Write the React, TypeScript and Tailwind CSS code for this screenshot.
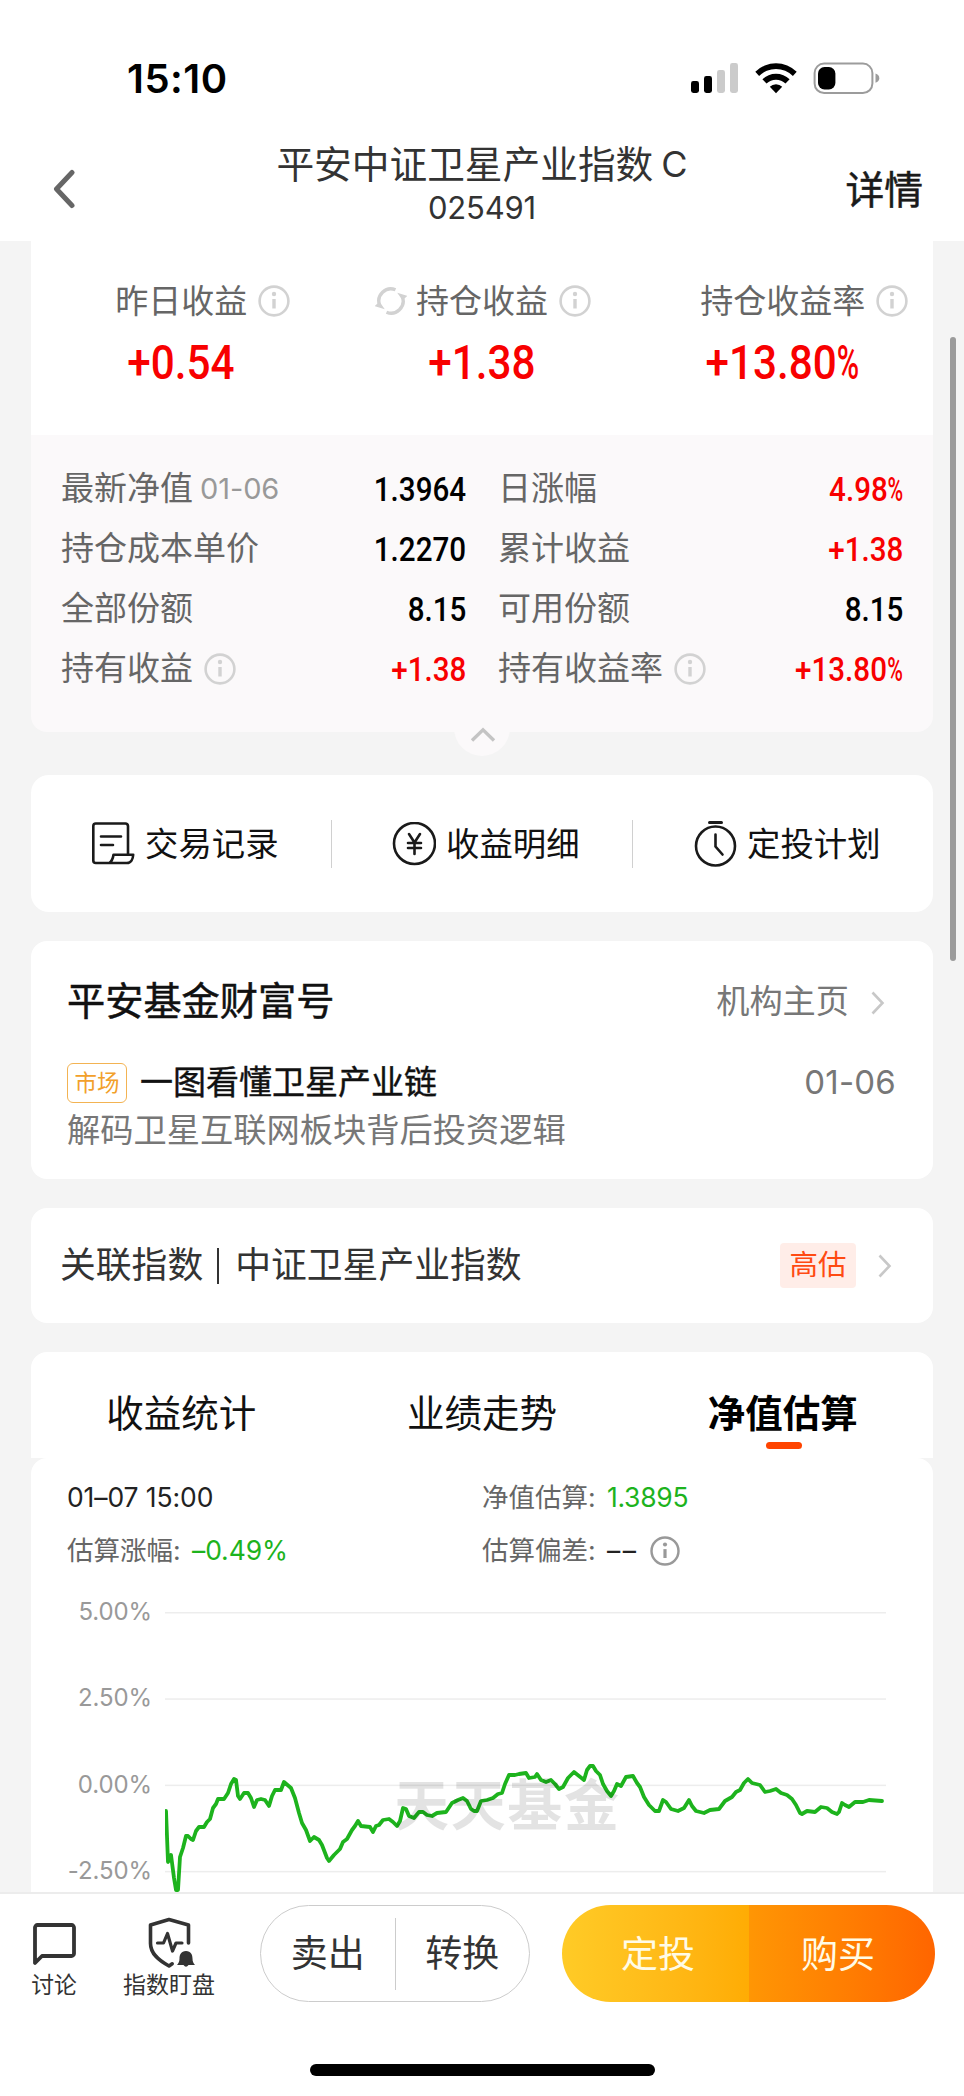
import type { ReactNode } from "react";
import clsx from "clsx";

const GREEN = "#1db31d";

// [x, y] in the chart's own 721 x 279 box
const POINTS: [number, number][] = [
  [1, 119], [3, 170], [6, 163], [9, 186], [11, 198], [13, 198], [15, 165], [18, 156], [21, 144], [23, 144],
  [26, 147], [28, 148], [31, 139], [34, 135], [39, 135], [42, 130], [45, 127], [48, 116], [51, 112], [53, 107],
  [59, 107], [63, 101], [66, 92], [69, 87], [71, 88], [73, 104], [75, 107], [79, 101], [83, 101], [86, 106],
  [89, 115], [92, 108], [96, 107], [100, 108], [104, 114], [107, 104], [110, 98], [116, 98], [119, 90], [126, 96],
  [130, 106], [134, 121], [137, 131], [141, 138], [145, 149], [149, 145], [154, 148], [157, 153], [162, 166], [164, 169],
  [169, 163], [175, 157], [178, 150], [182, 147], [187, 138], [190, 134], [193, 129], [196, 134], [205, 135], [208, 140],
  [211, 134], [214, 133], [218, 128], [224, 127], [228, 130], [232, 134], [235, 129], [238, 116], [241, 117], [244, 124],
  [249, 126], [254, 120], [258, 120], [262, 123], [267, 124], [272, 121], [281, 120], [287, 111], [293, 108], [298, 106],
  [302, 109], [306, 117], [309, 119], [312, 119], [316, 109], [322, 108], [328, 106], [333, 102], [337, 101], [340, 92],
  [344, 83], [350, 83], [354, 82], [361, 81], [364, 86], [370, 85], [372, 82], [376, 88], [381, 90], [386, 88],
  [390, 92], [394, 97], [398, 95], [403, 86], [409, 80], [414, 84], [419, 88], [422, 78], [425, 74], [428, 74],
  [431, 79], [435, 83], [438, 92], [442, 99], [446, 104], [449, 99], [452, 92], [456, 94], [461, 85], [468, 84],
  [472, 91], [475, 95], [479, 105], [484, 113], [490, 119], [494, 119], [498, 108], [501, 110], [506, 117], [513, 119],
  [519, 116], [524, 108], [527, 114], [531, 119], [539, 121], [545, 118], [554, 117], [560, 109], [567, 105], [571, 100],
  [575, 98], [579, 91], [583, 87], [587, 91], [595, 93], [600, 100], [605, 99], [611, 97], [616, 101], [622, 103],
  [627, 107], [631, 113], [635, 121], [637, 122], [642, 119], [650, 120], [656, 115], [662, 116], [667, 120], [672, 122],
  [674, 120], [677, 111], [680, 113], [684, 115], [690, 110], [698, 110], [704, 108], [717, 109],
];

const TICKS = ["5.00%", "2.50%", "0.00%", "-2.50%"];

function Info({ className }: { className?: string }) {
  return (
    <svg viewBox="0 0 32 32" className={clsx("shrink-0", className)} fill="none" stroke="currentColor">
      <circle cx="16" cy="16" r="14.4" strokeWidth="2.6" />
      <path d="M16 14v9.5" strokeWidth="3.4" />
      <circle cx="16" cy="9" r="2.2" fill="currentColor" stroke="none" />
    </svg>
  );
}

function Chevron({ className }: { className?: string }) {
  return (
    <svg viewBox="0 0 14 24" className={clsx("h-6 w-3.5 shrink-0", className)} fill="none" stroke="#c8c8c8" strokeWidth="2.6">
      <path d="M1.5 1.5 11.5 12 1.5 22.5" />
    </svg>
  );
}

// Narrow DIN-like numerals with a condensed percent sign
function Figure({ value, className, percentClass }: { value: string; className: string; percentClass: string }) {
  const percent = value.endsWith("%");
  return (
    <span className={clsx("flex font-[Roboto] font-medium", className)}>
      {percent ? value.slice(0, -1) : value}
      {percent && (
        <span className={percentClass}>
          <span className="inline-block origin-left scale-x-[0.72]">%</span>
        </span>
      )}
    </span>
  );
}

function StatusBar() {
  return (
    <div className="flex h-[125px] items-start">
      <span className="ml-[127px] mt-[58px] w-[120px] text-[40px] font-semibold leading-[41px] tracking-[0.5px] text-black">
        15:10
      </span>
      <svg viewBox="0 0 190 34" className="ml-[443px] mt-[61px] h-[34px] w-[190px]">
        <rect x="1" y="20" width="8" height="12" rx="2.4" />
        <rect x="14" y="15" width="8" height="17" rx="2.4" />
        <rect x="27" y="9" width="8" height="23" rx="2.4" fill="#cbcbcb" />
        <rect x="40" y="2" width="8" height="30" rx="2.4" fill="#cbcbcb" />
        <path d="M65.3 10.8a29.3 29.3 0 0 1 41.4 0l-3.8 4.3a23.6 23.6 0 0 0-33.8 0z" />
        <path d="M72.4 18.3a19.3 19.3 0 0 1 27.2 0l-4.1 4.3a13.4 13.4 0 0 0-19 0z" />
        <path d="M79.8 25.7a8.8 8.8 0 0 1 12.4 0L86 32.2z" />
        <rect x="124.6" y="2.6" width="57.8" height="29.4" rx="9.5" fill="none" stroke="#9c9c9c" strokeWidth="2" />
        <rect x="128" y="6" width="17.4" height="22.4" rx="6.5" />
        <path d="M185.5 12.6c2.4.8 3.8 2.4 3.8 4.6s-1.4 3.8-3.8 4.6z" fill="#9c9c9c" />
      </svg>
    </div>
  );
}

function Header() {
  return (
    <header className="flex h-[116px] items-start text-[#333]">
      <svg viewBox="0 0 24 40" className="ml-[52px] mt-[44px] h-10 w-6" fill="none" stroke="#666" strokeWidth="5" strokeLinecap="round" strokeLinejoin="round">
        <path d="M20 3.5 4.5 20 20 36.5" />
      </svg>
      <div className="ml-[156px] mt-[18px] flex w-[500px] flex-col items-center">
        <h1 className="flex items-center gap-2 text-[37.7px] leading-[42px]">
          平安中证卫星产业指数<span className="text-[36px]">C</span>
        </h1>
        <p className="mt-[5px] text-[31px] leading-9 tracking-[-0.2px]">025491</p>
      </div>
      <span className="ml-auto mr-[41px] mt-[44px] text-[38.8px] leading-[42px] text-[#1a1a1a] [-webkit-text-stroke:0.5px]">详情</span>
    </header>
  );
}

function Headline({ label, value, refresh }: { label: string; value: string; refresh?: boolean }) {
  return (
    <div className="flex flex-1 flex-col items-center">
      <div className="flex items-center gap-[11px] text-[33px] leading-[40px] text-[#666]">
        {refresh ? (
          <svg viewBox="0 0 32 32" className="-mr-0.5 ml-0.5 h-8 w-8 shrink-0" fill="none" stroke="#d2d2d2" strokeWidth="3.4">
            <path d="M20.500 4.800A12 12 0 0 0 4.600 20" />
            <path d="M11.500 27.200A12 12 0 0 0 27.400 12" />
            <path d="m-.5 21.200 5-4.500 5.300 7.600zM32.500 10.800l-5 4.500-5.300-7.600z" fill="#d2d2d2" stroke="none" />
          </svg>
        ) : (
          <span className="w-8 shrink-0" />
        )}
        <span className="whitespace-nowrap">{label}</span>
        <Info className="h-8 w-8 text-[#d2d2d2]" />
      </div>
      <Figure
        value={value}
        className="mt-[18px] scale-x-[0.88] text-[48px] leading-[48px] text-[#f80000]"
        percentClass="w-[26px]"
      />
    </div>
  );
}

function Detail({ label, note, info, value, red }: { label: string; note?: string; info?: boolean; value: string; red?: boolean }) {
  return (
    <div className="flex h-[60px] items-center text-[33px] text-[#666]">
      <span>{label}</span>
      {note && <span className="ml-[7px] text-[29px] tracking-[-0.1px] text-[#999]">{note}</span>}
      {info && <Info className="ml-[11px] h-8 w-8 text-[#d2d2d2]" />}
      <Figure
        value={value}
        className={clsx("ml-auto origin-right scale-x-[0.87] text-[34px]", red ? "text-[#f80000]" : "text-black")}
        percentClass="w-[18px]"
      />
    </div>
  );
}

function Holdings() {
  return (
    <section className="relative mx-[31px]">
      <div className="flex h-[194px] bg-white pt-[40px]">
        <Headline label="昨日收益" value="+0.54" />
        <Headline label="持仓收益" value="+1.38" refresh />
        <Headline label="持仓收益率" value="+13.80%" />
      </div>
      <div className="grid h-[297px] grid-cols-[405px_405px] content-start gap-x-8 rounded-b-2xl bg-[#fbf9fa] pl-[30px] pt-[24px]">
        <Detail label="最新净值" note="01-06" value="1.3964" />
        <Detail label="日涨幅" value="4.98%" red />
        <Detail label="持仓成本单价" value="1.2270" />
        <Detail label="累计收益" value="+1.38" red />
        <Detail label="全部份额" value="8.15" />
        <Detail label="可用份额" value="8.15" />
        <Detail label="持有收益" info value="+1.38" red />
        <Detail label="持有收益率" info value="+13.80%" red />
      </div>
      <div className="absolute -bottom-6 left-[423px] flex h-14 w-14 items-center justify-center rounded-full bg-[#fbf9fa]">
        <svg viewBox="0 0 26 16" className="ml-0.5 mt-[14px] h-4 w-[26px]" fill="none" stroke="#c4c4c4" strokeWidth="3.4">
          <path d="M2 13.5 13 2.8l11 10.7" />
        </svg>
      </div>
    </section>
  );
}

function Action({ icon, children }: { icon: ReactNode; children: ReactNode }) {
  return (
    <div className="flex flex-1 items-center gap-[10px] pl-[60px] pt-0.5 text-[33.400px] text-[#111]">
      {icon}
      <span className="whitespace-nowrap">{children}</span>
    </div>
  );
}

function Actions() {
  return (
    <section className="mx-[31px] mt-[43px] flex h-[137px] items-center rounded-[18px] bg-white">
      <Action
        icon={
          <svg viewBox="0 0 44 44" className="h-11 w-11" fill="none" stroke="#1a1a1a" strokeWidth="2.6" strokeLinejoin="round" strokeLinecap="round">
            <path d="M37 32V4a2.500 2.500 0 0 0-2.500-2.500H4.800A2.500 2.500 0 0 0 2.300 4v34.500a2.500 2.500 0 0 0 2.500 2.500H36c4 0 6-4 6.200-8.200H22.500c-.5 3.600-1.600 6.500-4.300 8.200" />
            <path d="M10 14.500h20M10 23h12" />
          </svg>
        }
      >
        交易记录
      </Action>
      <i className="h-12 w-px bg-[#d0d0d0]" />
      <Action
        icon={
          <svg viewBox="0 0 44 44" className="h-11 w-11" fill="none" stroke="#1a1a1a" strokeWidth="2.6" strokeLinecap="round">
            <circle cx="22.500" cy="21.500" r="20.500" />
            <path d="m17 12 5.500 8.500L28 12M22.500 20.500V32M16 21h13M16 26h13" />
          </svg>
        }
      >
        收益明细
      </Action>
      <i className="h-12 w-px bg-[#d0d0d0]" />
      <Action
        icon={
          <svg viewBox="0 0 44 48" className="h-12 w-11" fill="none" stroke="#1a1a1a" strokeWidth="2.600" strokeLinecap="round">
            <path d="M16.500 2.500h12" strokeWidth="3" />
            <circle cx="22.500" cy="26" r="19.500" />
            <path d="M22.500 14.500v12l7 8" />
          </svg>
        }
      >
        定投计划
      </Action>
    </section>
  );
}

function Fortune() {
  return (
    <section className="mx-[31px] mt-[29px] h-[238px] rounded-2xl bg-white pl-9 pr-[37px] pt-[39px]">
      <div className="flex h-11 items-center">
        <h2 className="text-[38.200px] text-[#111] [-webkit-text-stroke:0.5px]">平安基金财富号</h2>
        <span className="ml-auto text-[33.200px] text-[#777]">机构主页</span>
        <Chevron className="ml-[22px] mr-[11px] mt-0.5" />
      </div>
      <div className="mt-[38px] flex h-[42px] items-center">
        <span className="flex h-10 w-[60px] items-center justify-center rounded-md border-[1.5px] border-[#f3b352] text-[22.500px] text-[#f2a02b]">
          市场
        </span>
        <span className="ml-[13px] text-[33px] text-[#111] [-webkit-text-stroke:0.4px]">一图看懂卫星产业链</span>
        <span className="ml-auto text-[33px] tracking-[0.2px] text-[#777]">01-06</span>
      </div>
      <p className="mt-[5px] text-[33.250px] leading-[42px] text-[#777]">解码卫星互联网板块背后投资逻辑</p>
    </section>
  );
}

function RelatedIndex() {
  return (
    <section className="mx-[31px] mt-[29px] flex h-[115px] items-center rounded-2xl bg-white pl-[29px] pr-[41px] text-[35.800px] text-[#333]">
      <span>关联指数</span>
      <i className="ml-[14px] mr-[16px] h-9 w-0.5 bg-[#333]" />
      <span>中证卫星产业指数</span>
      <span className="ml-auto flex h-[45px] w-[76px] items-center justify-center rounded bg-[#ffede8] text-[28.500px] text-[#ff4a12]">高估</span>
      <Chevron className="ml-[22px]" />
    </section>
  );
}

function Chart() {
  return (
    <div className="flex h-[311px] overflow-hidden">
      <div className="flex w-[121px] flex-col items-end pt-[15px]">
        {TICKS.map((t) => (
          <span key={t} className="h-[86.300px] shrink-0 text-[24px] leading-[31px] tracking-[-0.1px] text-[#999]">
            {t}
          </span>
        ))}
      </div>
      <svg viewBox="0 0 721 311" className="ml-[13px] h-[311px] w-[721px] shrink-0">
        {TICKS.map((t, i) => (
          <rect key={t} y={31 + i * 86.300} width="721" height="1.500" fill="#ededed" />
        ))}
        <polyline
          points={POINTS.map(([x, y]) => `${x},${y - 1}`).join(" ")}
          fill="none"
          stroke={GREEN}
          strokeWidth="3.800"
          strokeLinejoin="round"
          strokeLinecap="round"
          transform="translate(0 112)"
        />
        <text
          x="229"
          y="244"
          textLength="225"
          className="font-['Noto_Sans_CJK_SC',sans-serif] text-[55px] font-bold"
          fill="#000"
          fillOpacity="0.11"
        >
          天天基金
        </text>
      </svg>
    </div>
  );
}

function Estimate() {
  const tabs = ["收益统计", "业绩走势", "净值估算"];
  return (
    <section className="mx-[31px] mt-[29px]">
      <div className="flex h-[106px] rounded-t-2xl bg-white pt-10">
        {tabs.map((t, i) => (
          <div key={t} className="flex flex-1 flex-col items-center text-[37.500px] leading-[44px] text-[#111]">
            <span className={clsx(i === 2 && "font-bold text-black")}>{t}</span>
            {i === 2 && <i className="ml-0.5 mt-[6px] h-[7px] w-9 rounded-full bg-[#ff4400]" />}
          </div>
        ))}
      </div>
      <div className="rounded-t-2xl bg-white">
        <div className="grid h-[123px] grid-cols-[415px_1fr] content-start pl-9 pt-[13px] text-[26.500px] leading-[53px] text-[#666]">
          <span className="tracking-[-0.100px] text-[#222]">01–07 15:00</span>
          <span className="flex">
            <span className="w-[125px]">净值估算:</span>
            <span className="tracking-[-0.300px] text-[#1db31d]">1.3895</span>
          </span>
          <span className="flex">
            <span className="w-[125px]">估算涨幅:</span>
            <span className="tracking-[-0.100px] text-[#1db31d]">–0.49%</span>
          </span>
          <span className="flex items-center">
            <span className="w-[125px]">估算偏差:</span>
            <span className="tracking-[2.500px] text-[#222]">––</span>
            <Info className="ml-[11px] h-[30px] w-[30px] text-[#999]" />
          </span>
        </div>
        <Chart />
      </div>
    </section>
  );
}

function Toolbar() {
  return (
    <footer className="flex h-[204px] flex-col border-t-2 border-[#ececec] bg-white text-[#333]">
      <div className="flex h-[108px] items-end">
        <div className="ml-[22px] flex w-16 flex-col items-center">
          <svg viewBox="0 0 44 44" className="h-11 w-11" fill="none" stroke="#333" strokeWidth="3.800" strokeLinejoin="round">
            <path d="M3 40V4.500A2.500 2.500 0 0 1 5.500 2h34A2.500 2.500 0 0 1 42 4.500v26a2.500 2.500 0 0 1-2.500 2.500H10z" />
          </svg>
          <span className="mb-px mt-[2px] text-[22.800px] leading-[32px]">讨论</span>
        </div>
        <div className="ml-[31px] flex w-[104px] flex-col items-center">
          <svg viewBox="0 0 48 52" className="ml-[3px] h-[52px] w-12" fill="none" stroke="#333" strokeWidth="3.600" strokeLinejoin="round" strokeLinecap="round">
            <path d="M41.500 26V8L22 2.500 3.500 8v18.500C3.500 37 12 43.500 22 49l3.200-2.200" />
            <path d="M10.500 26h6l4-9.500 5 17.500 3.500-8h6" strokeWidth="3.200" />
            <path d="M39 34c-5 0-6.500 4-6.500 7.500 0 3.500-1 4.500-2.500 6.500h6.500q2.500 3.500 5 0H48c-1.500-2-2.500-3-2.500-6.500C45.500 38 44 34 39 34z" fill="#333" stroke="none" />
          </svg>
          <span className="mb-px whitespace-nowrap text-[23px] leading-[32px]">指数盯盘</span>
        </div>
        <div className="ml-[39px] flex h-[97px] w-[270px] items-center rounded-full border-[1.500px] border-[#ccc] text-[37px]">
          <span className="flex-1 text-center">卖出</span>
          <i className="h-[72px] w-px bg-[#ccc]" />
          <span className="flex-1 text-center">转换</span>
        </div>
        <div className="ml-8 flex h-[97px] w-[373px] overflow-hidden rounded-full text-[37px] leading-[99px] text-[#fffbe6]">
          <span className="w-[187px] bg-linear-to-r from-[#ffcb26] to-[#ffac04] pl-[5px] text-center">定投</span>
          <span className="flex-1 bg-linear-to-r from-[#ff9604] to-[#ff6500] pr-[8px] text-center">购买</span>
        </div>
      </div>
      <i className="mx-auto mt-[62px] h-3 w-[345px] rounded-full bg-black" />
    </footer>
  );
}

export default function App() {
  return (
    <div className="relative flex h-[2096px] w-[964px] flex-col overflow-hidden bg-[#f4f4f4] font-[Inter,'Noto_Sans_CJK_SC',sans-serif]">
      <div className="bg-white">
        <StatusBar />
        <Header />
      </div>
      <Holdings />
      <Actions />
      <Fortune />
      <RelatedIndex />
      <Estimate />
      <Toolbar />
      <div className="absolute left-[950px] top-[337px] h-[624px] w-[6px] rounded-full bg-[#9b9b9b]" />
    </div>
  );
}
